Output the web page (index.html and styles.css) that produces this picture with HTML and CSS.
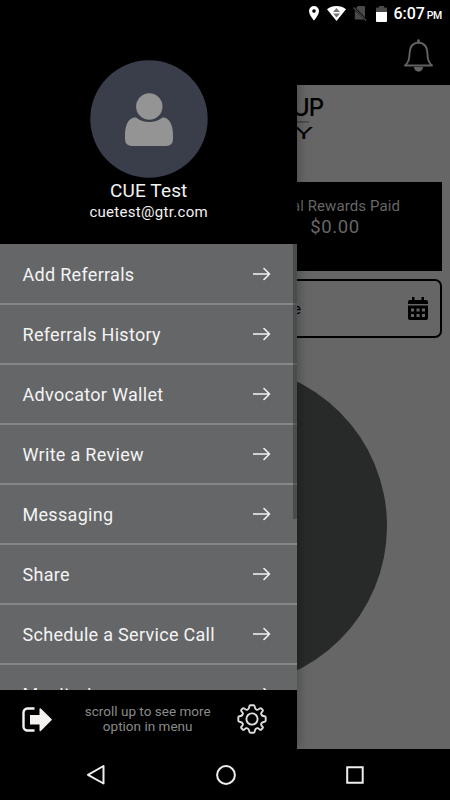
FILE: index.html
```html
<!DOCTYPE html>
<html lang="en">
<head>
<meta charset="utf-8">
<title>Menu</title>
<link rel="stylesheet" href="styles.css">
</head>
<body>
<div class="screen">
  <header class="topbar">
    <div class="status">
      <svg class="pin" width="10" height="15" viewBox="0 0 10 15"><path fill-rule="evenodd" fill="#fff" d="M5 0a5 5 0 0 0-5 5c0 4 5 9.600 5 9.600S10 9 10 5a5 5 0 0 0-5-5zM5 3.300a1.800 1.800 0 1 1 0 3.600a1.800 1.800 0 0 1 0-3.600z"/></svg>
      <svg class="wifi" width="19" height="15" viewBox="0 0 19 15"><path fill="#fff" d="M0 3.200C5.500-1 13.500-1 19 3.200L9.500 15z"/><path fill="#777" d="M9.500 2L13 6H6zM6 7.400h7l-3.500 4z"/></svg>
      <svg class="sim" width="14" height="15" viewBox="0 0 14 15"><path fill="#4a4a4a" d="M5 0h6a1 1 0 0 1 1 1v10.500L3 2zM1.800 4.500L11 13.500H2.800a1 1 0 0 1-1-1z"/><path d="M.5 1.500l12.500 13" stroke="#4a4a4a" stroke-width="1.200"/></svg>
      <svg class="battery" width="11" height="16" viewBox="0 0 11 16"><path fill="#4a4a4a" d="M3 0h5v1.500h2a1 1 0 0 1 1 1V7H0V2.500a1 1 0 0 1 1-1h2z"/><path fill="#fff" d="M0 6h11v9a1 1 0 0 1-1 1H1a1 1 0 0 1-1-1z"/></svg>
      <span class="clock">6:07</span><span class="meridiem">PM</span>
    </div>
    <svg class="bell" width="32" height="34" viewBox="0 0 32 34"><path d="M15.500 3.500C9 4 6.800 8.500 6.600 14C6.400 20 5.800 23 2 26.500H29C25.200 23 24.600 20 24.400 14C24.200 8.500 22 4 15.500 3.500z" fill="none" stroke="#636363" stroke-width="1.900" stroke-linejoin="round"/><path d="M15.500 1.500v1.500" stroke="#636363" stroke-width="2.600" stroke-linecap="round"/><path d="M11 28h9a4.500 4.700 0 0 1-9 0z" fill="#636363"/></svg>
  </header>

  <main class="home">
    <div class="logo">
      <span class="logo-up">UP</span>
      <span class="logo-bar"></span>
      <span class="logo-y">Y</span>
    </div>
    <section class="rewards">
      <div class="total">
        <span class="total-label">Total Rewards Paid</span>
        <span class="total-value">$0.00</span>
      </div>
    </section>
    <div class="datefield">
      <span class="date-label">Date</span>
      <svg width="20" height="23" viewBox="0 0 20 23"><path fill="#000" fill-rule="evenodd" d="M4 0h2.500v3h7V0H16v3h2a2 2 0 0 1 2 2v2H0V5a2 2 0 0 1 2-2h2zM0 8.500h20V21a2 2 0 0 1-2 2H2a2 2 0 0 1-2-2zM3 11.500v3h3v-3zm5.500 0v3h3v-3zm5.500 0v3h3v-3zM3 17v3h3v-3zm5.500 0v3h3v-3zm5.500 0v3h3v-3z"/></svg>
    </div>
    <div class="chart"></div>
  </main>

  <nav class="sysnav">
    <svg width="20" height="22" viewBox="0 0 20 22"><path d="M17.500 2v17.500L2 10.800z" fill="none" stroke="#eee" stroke-width="2" stroke-linejoin="round"/></svg>
    <svg width="22" height="22" viewBox="0 0 22 22"><circle cx="11" cy="11" r="8.900" fill="none" stroke="#eee" stroke-width="2"/></svg>
    <svg width="20" height="22" viewBox="0 0 20 22"><path d="M2.200 3.200h15.500v15.500H2.200z" fill="none" stroke="#eee" stroke-width="2"/></svg>
  </nav>

  <aside class="drawer">
    <div class="profile">
      <svg class="avatar" width="118" height="118" viewBox="0 0 118 118"><circle cx="59" cy="59" r="58.700" fill="#393e4a"/><circle cx="59.300" cy="46.500" r="13.200" fill="#949494"/><path fill="#949494" d="M46 57.500C41 56.800 35 61.500 35 75v4q0 7 7 7h34q7 0 7-7v-4C83 61.500 77 56.800 72.500 57.500C65 63.500 53.500 63.500 46 57.500z"/></svg>
      <span class="name">CUE Test</span>
      <span class="email">cuetest@gtr.com</span>
    </div>
    <div class="menu">
      <div class="item"><span>Add Referrals</span><svg class="arrow" viewBox="0 0 18 14"><path d="M.5 7h16M11 1.500L16.500 7L11 12.500"/></svg></div>
      <div class="item"><span>Referrals History</span><svg class="arrow" viewBox="0 0 18 14"><path d="M.5 7h16M11 1.500L16.500 7L11 12.500"/></svg></div>
      <div class="item"><span>Advocator Wallet</span><svg class="arrow" viewBox="0 0 18 14"><path d="M.5 7h16M11 1.500L16.500 7L11 12.500"/></svg></div>
      <div class="item"><span>Write a Review</span><svg class="arrow" viewBox="0 0 18 14"><path d="M.5 7h16M11 1.500L16.500 7L11 12.500"/></svg></div>
      <div class="item"><span>Messaging</span><svg class="arrow" viewBox="0 0 18 14"><path d="M.5 7h16M11 1.500L16.500 7L11 12.500"/></svg></div>
      <div class="item"><span>Share</span><svg class="arrow" viewBox="0 0 18 14"><path d="M.5 7h16M11 1.500L16.500 7L11 12.500"/></svg></div>
      <div class="item"><span>Schedule a Service Call</span><svg class="arrow" viewBox="0 0 18 14"><path d="M.5 7h16M11 1.500L16.500 7L11 12.500"/></svg></div>
      <div class="item"><span>Monitoring</span><svg class="arrow" viewBox="0 0 18 14"><path d="M.5 7h16M11 1.500L16.500 7L11 12.500"/></svg></div>
      <div class="scrollbar"></div>
    </div>
    <div class="drawer-foot">
      <svg width="30" height="25" viewBox="0 0 30 25"><path d="M12.500 1.500H5.500a4 4 0 0 0-4 4v14a4 4 0 0 0 4 4h7" fill="none" stroke="#f5f2f2" stroke-width="2.400"/><path d="M8 8h9.500V2.200q0-1.500 1.300-.7L29.500 12q.7.600 0 1.200L18.800 24q-1.300.7-1.300-.7V17.500H8z" fill="#f5f2f2"/></svg>
      <p class="hint">scroll up to see more option in menu</p>
      <svg class="gear" width="30" height="30" viewBox="-15 -15 30 30"><g fill="none" stroke="#ddd" stroke-width="1.900" stroke-linejoin="round"><path d="M-1.500-13.700H1.500Q2.600-13.700 2.700-12.500Q2.900-10 4.500-9.300Q6-8.700 7.500-10.300Q8.500-11.300 9.300-10.500L10.500-9.300Q11.300-8.500 10.300-7.500Q8.700-6 9.300-4.500Q10-2.900 12.500-2.700Q13.700-2.600 13.700-1.500V1.500Q13.700 2.600 12.500 2.700Q10 2.900 9.300 4.500Q8.700 6 10.300 7.500Q11.300 8.500 10.500 9.300L9.300 10.500Q8.500 11.300 7.500 10.300Q6 8.700 4.500 9.300Q2.900 10 2.700 12.500Q2.600 13.700 1.500 13.700H-1.500Q-2.600 13.700-2.700 12.500Q-2.900 10-4.500 9.300Q-6 8.700-7.500 10.300Q-8.500 11.300-9.300 10.500L-10.500 9.300Q-11.300 8.500-10.300 7.500Q-8.700 6-9.300 4.500Q-10 2.900-12.500 2.700Q-13.700 2.600-13.700 1.500V-1.500Q-13.700-2.600-12.500-2.700Q-10-2.900-9.300-4.500Q-8.700-6-10.300-7.500Q-11.300-8.500-10.500-9.300L-9.300-10.500Q-8.500-11.300-7.500-10.300Q-6-8.700-4.500-9.300Q-2.900-10-2.700-12.500Q-2.600-13.700-1.500-13.700z"/><circle r="5.600"/></g></svg>
    </div>
  </aside>
</div>
</body>
</html>
```
FILE: styles.css
```css
* { box-sizing: border-box; }
body { margin: 0; font-family: Roboto, sans-serif; background: #000; }
svg { display: block; flex: none; }

.screen {
  position: relative;
  width: 450px;
  height: 800px;
  overflow: hidden;
  display: flex;
  flex-direction: column;
}

.topbar { height: 85px; background: #000; flex: none; }
.status {
  height: 27px;
  display: flex;
  align-items: center;
  justify-content: flex-end;
  padding-right: 8px;
  color: #fff;
}
.wifi { margin-left: 8px; }
.sim { margin-left: 7px; }
.battery { margin-left: 9px; }
.clock { font-size: 16px; font-weight: 500; margin-left: 7px; line-height: 28px; letter-spacing: -.1px; }
.meridiem { font-size: 10.500px; font-weight: 500; margin-left: 2px; padding-top: 4px; letter-spacing: -.3px; }
.bell { margin: 12px 0 0 403px; }

.home {
  height: 664px;
  flex: none;
  background: #666;
  overflow: hidden;
}
.logo { height: 97px; padding: 6px 0 0 294px; }
.logo-up {
  display: block;
  height: 30px;
  font: 500 24px/34px Inter, sans-serif;
  letter-spacing: -1px;
  width: 40px;
  margin-left: -2px;
}
.logo-bar { display: block; width: 15px; height: 2px; background: #4c4c4c; transform: skewX(-40deg); }
.logo-y {
  display: block;
  width: 11px;
  font: 16px/20px Inter, sans-serif;
  transform: scaleX(1.800);
  transform-origin: left;
  margin-left: 0;
}

.rewards {
  height: 89px;
  margin: 0 8px;
  background: #000;
  display: flex;
  justify-content: flex-end;
}
.total {
  width: 214px;
  display: flex;
  flex-direction: column;
  align-items: center;
  color: #666;
}
.total-label { font-size: 15px; line-height: 20px; margin-top: 14px; letter-spacing: .1px; }
.total-value { font-size: 18.500px; line-height: 22px; letter-spacing: .6px; }

.datefield {
  margin: 8px 8px 0;
  height: 59px;
  border: 2px solid #000;
  border-radius: 7px;
  display: flex;
  align-items: center;
  justify-content: space-between;
  padding: 0 12.500px 0 260px;
  font-size: 15px;
}

.chart {
  width: 322px;
  height: 322px;
  border-radius: 50%;
  background: #282a29;
  margin: 27px 0 0 64.500px;
}

.sysnav {
  height: 51px;
  display: flex;
  align-items: center;
  justify-content: space-between;
  padding: 0 85px 0 86px;
  background: #000;
}

.drawer {
  position: absolute;
  left: 0;
  top: 0;
  width: 297.400px;
  height: 749px;
  background: #000;
  display: flex;
  flex-direction: column;
  box-shadow: 0 0 12px rgba(0, 0, 0, .35);
}
.profile {
  height: 244px;
  flex: none;
  padding-top: 60px;
  display: flex;
  flex-direction: column;
  align-items: center;
  color: #f2f2f2;
}
.name { font-size: 19px; line-height: 26px; letter-spacing: .15px; }
.email { font-size: 15px; line-height: 16px; letter-spacing: .3px; }

.menu {
  position: relative;
  height: 445.500px;
  flex: none;
  overflow: hidden;
  background: #656668;
}
.item {
  height: 60px;
  border-bottom: 2px solid #858687;
  position: relative;
  top: .5px;
  display: flex;
  align-items: center;
  justify-content: space-between;
  padding: 0 26px 0 22.500px;
  color: #f4f4f4;
  font-size: 18px;
  letter-spacing: .3px;
}
.item span { padding-top: 2px; }
.arrow {
  width: 18px;
  height: 14px;
  fill: none;
  stroke: #f4f4f4;
  stroke-width: 1.600;
  stroke-linecap: round;
  stroke-linejoin: round;
}
.scrollbar {
  position: absolute;
  right: 0;
  top: 0;
  width: 4.500px;
  height: 275px;
  background: rgba(50, 50, 50, .5);
}

.drawer-foot {
  flex: 1;
  display: flex;
  align-items: center;
  justify-content: space-between;
  padding: 0 30px 0 22px;
}
.hint {
  width: 135px;
  margin: 0 0 0 6px;
  font-size: 13.500px;
  line-height: 15.500px;
  letter-spacing: .02px;
  text-align: center;
  color: #8a8a8a;
}
```
